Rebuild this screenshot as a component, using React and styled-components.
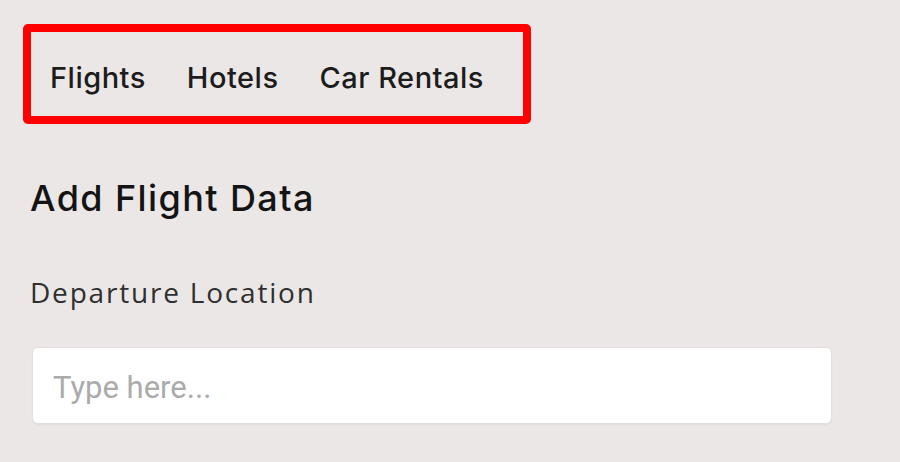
import React from "react";
import styled, { createGlobalStyle } from "styled-components";

const Global = createGlobalStyle`
  html, body { margin: 0; padding: 0; background: #ebe7e6; }
  body { font-family: Inter, "Open Sans", sans-serif; }
`;

const Page = styled.div`
  display: flex;
  flex-direction: column;
  align-items: flex-start;
  padding: 24px 30px 0 30px;
  min-height: 462px;
  box-sizing: border-box;
`;

const Nav = styled.nav`
  display: flex;
  align-items: center;
  gap: 41px;
  width: 508px;
  height: 100px;
  box-sizing: border-box;
  margin-left: -7px;
  padding: 6px 0 0 19px;
  border: 8px solid #ff0000;
  border-radius: 5px;
`;

const NavItem = styled.a`
  font-family: Inter, sans-serif;
  font-size: 29px;
  font-weight: 500;
  line-height: 1;
  color: #1c1c1c;
  text-decoration: none;
  letter-spacing: 0.5px;
  cursor: pointer;
`;

const Heading = styled.h2`
  margin: 56px 0 0 0;
  font-family: Inter, sans-serif;
  font-size: 36px;
  font-weight: 500;
  line-height: 1;
  color: #141414;
  letter-spacing: 1.4px;
`;

const Label = styled.label`
  margin-top: 62px;
  font-family: "Open Sans", sans-serif;
  font-size: 28px;
  font-weight: 400;
  line-height: 1;
  color: #2f2f2f;
  letter-spacing: 1.8px;
`;

const Input = styled.input`
  margin: 41px 0 0 2px;
  width: 800px;
  height: 77px;
  box-sizing: border-box;
  padding: 3px 20px 0 20px;
  background: #ffffff;
  border: 1px solid #e2dfde;
  border-radius: 6px;
  box-shadow: 0 1px 2px rgba(0, 0, 0, 0.04);
  font-family: Roboto, sans-serif;
  font-size: 31px;
  color: #222;
  outline: none;
  &::placeholder {
    color: #ababab;
  }
`;

export default function App() {
  return (
    <>
      <Global />
      <Page>
        <Nav>
          <NavItem>Flights</NavItem>
          <NavItem>Hotels</NavItem>
          <NavItem>Car Rentals</NavItem>
        </Nav>
        <Heading>Add Flight Data</Heading>
        <Label htmlFor="dep">Departure Location</Label>
        <Input id="dep" placeholder="Type here..." />
      </Page>
    </>
  );
}
